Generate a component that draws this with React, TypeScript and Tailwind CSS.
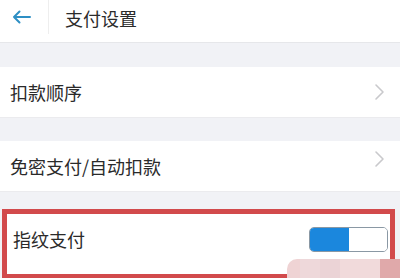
import React from "react";

const Chevron = () => (
  <svg width="12" height="18" viewBox="0 0 12 18" fill="none">
    <path d="M2 2 L9 9 L2 16" stroke="#c9c9cc" strokeWidth="1.6" strokeLinecap="round" strokeLinejoin="round" />
  </svg>
);

export default function App() {
  return (
    <div
      className="w-[400px] h-[278px] overflow-hidden bg-[#f1f2f6] relative"
      style={{ fontFamily: '"Noto Sans CJK SC", "Noto Sans", sans-serif' }}
    >
      <div className="h-[43px] bg-white border-b border-[#e6e7ea] flex items-center">
        <div className="w-[49px] h-[34px] self-start flex items-center pl-[12px] border-r border-[#eeeeee]">
          <svg width="19" height="14" viewBox="0 0 19 14" fill="none">
            <path d="M18 7 H2 M7.5 1.5 L2 7 L7.5 12.5" stroke="#2e8fc4" strokeWidth="2" strokeLinecap="round" strokeLinejoin="round" />
          </svg>
        </div>
        <div className="pl-[16px] text-[18px] leading-none text-[#2b2b2b] -mt-[6px]">支付设置</div>
      </div>
      <div className="h-[24px]" />
      <div className="h-[51px] bg-white flex items-center justify-between pl-[10px] pr-[14px] border-b border-[#ebebee]">
        <span className="text-[18px] leading-none text-[#2a2a2a]">扣款顺序</span>
        <Chevron />
      </div>
      <div className="h-[23px]" />
      <div className="h-[51px] bg-white flex items-start justify-between pl-[10px] pr-[14px] pt-[16px] border-b border-[#ebebee]">
        <span className="text-[18px] leading-none text-[#2a2a2a]">免密支付/自动扣款</span>
        <div className="-mt-[7px]"><Chevron /></div>
      </div>
      <div className="h-[17px]" />
      <div className="mx-[2px] mr-[5px] h-[70px] border-[5px] border-[#d24a4c] bg-white flex items-center justify-between pl-[6px] pr-[2px]">
        <span className="text-[18px] leading-none text-[#2a2a2a] -mt-[10px]">指纹支付</span>
        <div className="-mt-[9px] w-[79px] h-[25px] rounded-[5px] flex overflow-hidden border border-[#8a98a4]">
          <div className="w-[39px] h-full bg-[#1b87dd]" />
          <div className="flex-1 h-full bg-white" />
        </div>
      </div>
      <div className="absolute left-[287px] top-[259px] w-[113px] h-[19px] rounded-tl-[10px] overflow-hidden flex">
        <div className="w-[13px] bg-[#efd3d4]" />
        <div className="w-[20px] bg-[#eed8da]" />
        <div className="w-[20px] bg-[#ebd3d6]" />
        <div className="w-[40px] bg-[#f1dadb]" />
        <div className="flex-1 bg-[#e0a9aa]" />
      </div>
    </div>
  );
}
